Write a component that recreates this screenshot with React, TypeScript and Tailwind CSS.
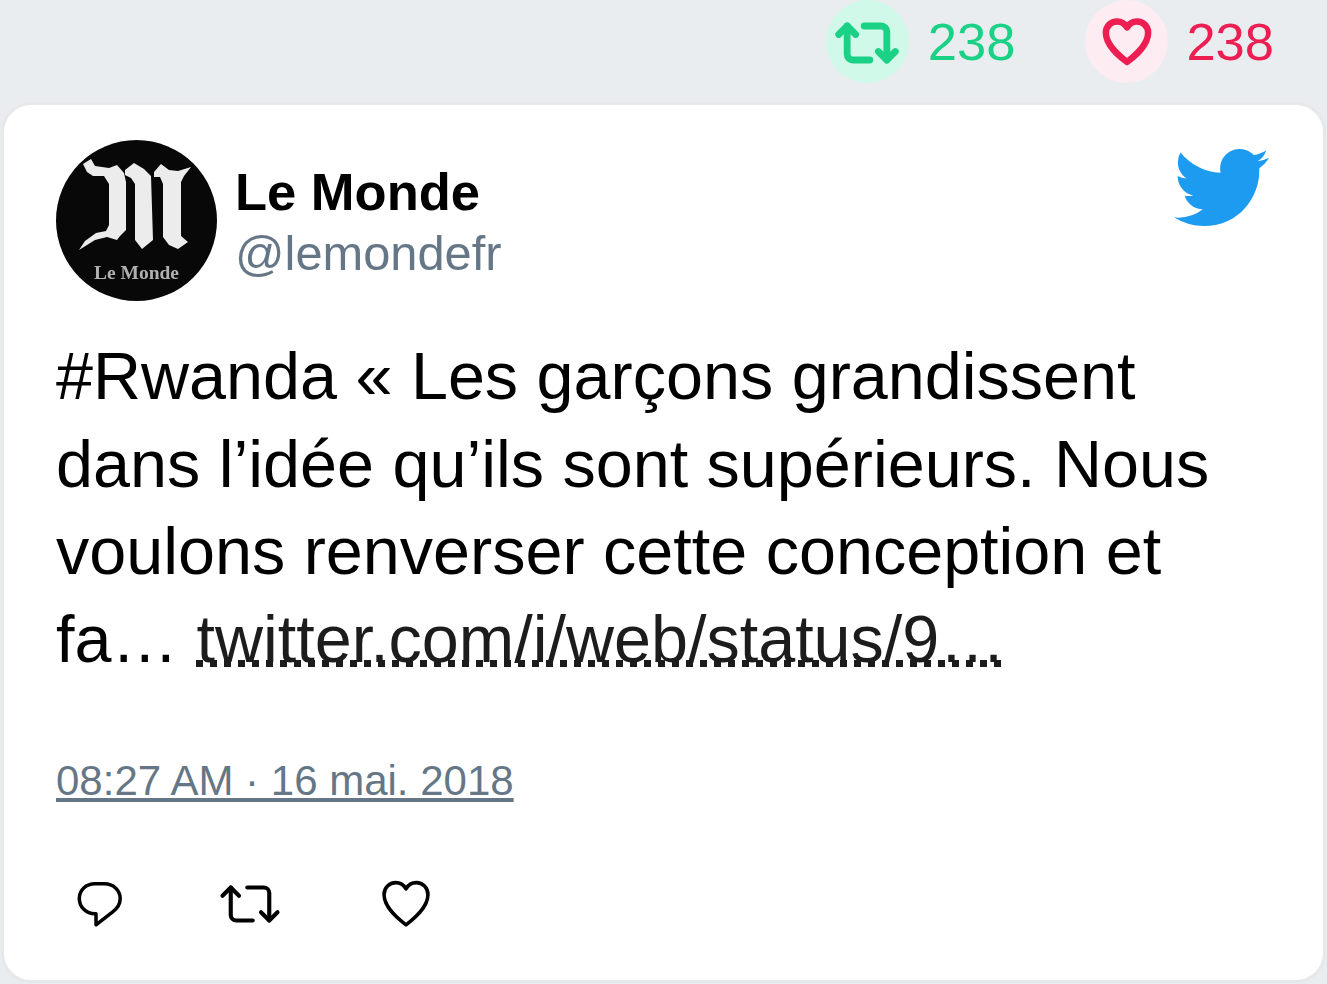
import { Repeat2 } from 'lucide-react'

function HeartIcon({ className, strokeWidth }: { className: string; strokeWidth: number }) {
  return (
    <svg viewBox="0 0 48 48" fill="none" stroke="currentColor" strokeWidth={strokeWidth} strokeLinejoin="round" className={className}>
      <path d="M24 42.5C19 38.5 4.5 28 4.5 15.5 4.5 9.5 9.2 5 14.8 5 18.6 5 22 7 24 10.5 26 7 29.4 5 33.2 5 38.8 5 43.5 9.5 43.5 15.5 43.5 28 29 38.5 24 42.5Z" />
    </svg>
  )
}

function ReplyIcon() {
  return (
    <svg viewBox="0 0 48 48" fill="none" stroke="currentColor" strokeWidth="3.5" strokeLinejoin="round" className="w-[48px] h-[48px]">
      <path d="M19 3.8h9.500C37 3.800 44.200 10 44.200 18.500c0 6-3 10-7.500 13.300L20 44.800V33.800h-1C10 33.800 3.300 27 3.300 18.500S10 3.800 19 3.800Z" />
    </svg>
  )
}

function Bird() {
  return (
    <svg viewBox="0 0 24 24" className="w-[95px] h-[95px] fill-[#1d9bf0]">
      <path d="M23.953 4.57a10 10 0 01-2.825.775 4.958 4.958 0 002.163-2.723c-.951.555-2.005.959-3.127 1.184a4.92 4.92 0 00-8.384 4.482C7.69 8.095 4.067 6.13 1.64 3.162a4.822 4.822 0 00-.666 2.475c0 1.71.87 3.213 2.188 4.096a4.904 4.904 0 01-2.228-.616v.06a4.923 4.923 0 003.946 4.827 4.996 4.996 0 01-2.212.085 4.936 4.936 0 004.604 3.417 9.867 9.867 0 01-6.102 2.105c-.39 0-.779-.023-1.17-.067a13.995 13.995 0 007.557 2.209c9.053 0 13.998-7.496 13.998-13.985 0-.21 0-.42-.015-.63A9.935 9.935 0 0024 4.59z" />
    </svg>
  )
}

// blackletter M of the avatar, slightly soft like the downscaled original
function Avatar() {
  return (
    <div className="relative w-[161px] h-[161px] rounded-full bg-[#080808] overflow-hidden shrink-0">
      <svg viewBox="0 0 161 161" className="absolute inset-0 w-full h-full blur-[0.7px]">
        <g fill="#ececec">
          <path d="M27 24l8-5 4 7 14 2 8-3 7 8 2 9v48l-6 6-3 4-10-3-12 3-16 10 6-9 11-8 10-2 3-6V44l-5-8H37l-6-4z" />
          <path d="M69 30l9-7 10 6 7 7 2 64-11 9-7-9V44l-4-6-6-3z" />
          <path d="M98 32l7-8 8 6 9 1 13-4-7 9-3 6v54l7 6-10 7-9-4-6-8V44l-3-7h-6z" />
        </g>
      </svg>
      <span className="absolute left-0 right-0 top-[121px] text-center text-[19.5px] leading-[24px] font-bold text-[#b0b0b0] blur-[0.7px] [font-family:'Liberation_Serif',serif]">
        Le Monde
      </span>
    </div>
  )
}

export default function App() {
  return (
    <div className="w-[1327px] h-[984px] overflow-hidden bg-[#e9edf0] [font-family:'Liberation_Sans',sans-serif]">
      <div className="h-[102px] flex justify-end pr-[53px]">
        <div className="flex h-[83px] items-center">
          <span className="w-[83px] h-[83px] rounded-full bg-[#d1f9e9] text-[#1bd185] flex items-center justify-center">
            <Repeat2 className="w-[68px] h-[68px] mt-[2px]" strokeWidth={2.4} />
          </span>
          <span className="ml-[19px] text-[52.5px] leading-[87px] text-[#1bd185]">238</span>
          <span className="ml-[70px] w-[83px] h-[83px] rounded-full bg-[#fdecf2] text-[#ed1e52] flex items-center justify-center">
            <HeartIcon className="w-[52px] h-[52px]" strokeWidth={6} />
          </span>
          <span className="ml-[18px] text-[52.5px] leading-[87px] text-[#ed1e52]">238</span>
        </div>
      </div>

      <div className="mx-[1px] h-[881px] rounded-[30px] border-[3px] border-[#e6e8ea] bg-white px-[52px] pt-[35px]">
        <div className="flex items-start justify-between">
          <div className="flex items-center">
            <Avatar />
            <div className="ml-[18px] pt-[2px]">
              <div className="text-[52.5px] leading-[62px] font-bold text-black">Le Monde</div>
              <div className="text-[48.8px] leading-[60px] text-[#657786]">@lemondefr</div>
            </div>
          </div>
          <div className="mr-[2px]">
            <Bird />
          </div>
        </div>

        <p className="mt-[32px] text-[66.5px] leading-[87.5px] text-black">
          #Rwanda « Les garçons grandissent dans l’idée qu’ils sont supérieurs. Nous voulons renverser cette conception et fa…{' '}
          <span className="-ml-[2px] pl-[2px] text-[#1c1c1c] bg-[repeating-linear-gradient(to_right,#1c1c1c_0_7px,transparent_7px_14px)] bg-[length:806px_7px] bg-no-repeat bg-[position:2px_calc(100%-9px)]">
            twitter.com/i/web/status/9…
          </span>
        </p>

        <div className="mt-[70px] text-[42px] leading-[56px] text-[#657786] underline">08:27 AM · 16 mai. 2018</div>

        <div className="mt-[62px] flex items-center text-black">
          <span className="ml-[20px]"><ReplyIcon /></span>
          <span className="ml-[93px]"><Repeat2 className="w-[66px] h-[66px]" strokeWidth={1.5} /></span>
          <span className="ml-[96px]"><HeartIcon className="w-[54px] h-[54px]" strokeWidth={3.2} /></span>
        </div>
      </div>
    </div>
  )
}
